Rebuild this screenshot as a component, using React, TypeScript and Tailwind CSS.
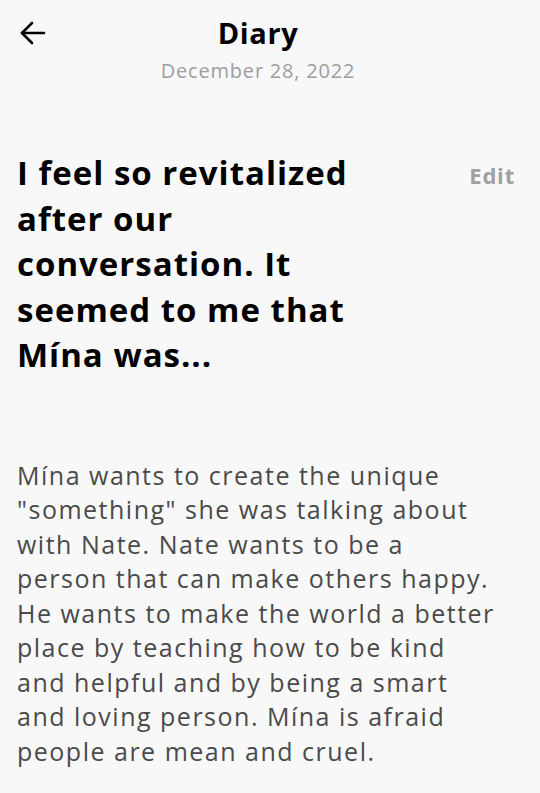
const bodyLines = [
  'Mína wants to create the unique',
  '"something" she was talking about',
  'with Nate. Nate wants to be a',
  'person that can make others happy.',
  'He wants to make the world a better',
  'place by teaching how to be kind',
  'and helpful and by being a smart',
  'and loving person. Mína is afraid',
  'people are mean and cruel.',
]

export default function App() {
  const font = { fontFamily: '"Open Sans", "Noto Sans", sans-serif' }
  return (
    <div className="min-h-[793px] w-[540px] bg-[#f8f8f8] text-black" style={font}>
      {/* Header */}
      <div className="relative h-[100px]">
        <button className="absolute left-[20px] top-[21px] text-black">
          <svg width="26" height="24" viewBox="0 0 26 24" fill="none" stroke="currentColor" strokeWidth="2.6" strokeLinecap="round" strokeLinejoin="round">
            <path d="M2 12H24" />
            <path d="M12 2L2 12L12 22" />
          </svg>
        </button>
        <div className="flex flex-col items-center pt-[13px] pr-[24px]">
          <h1 className="text-[29px] font-bold leading-[40px] tracking-[0.6px]">Diary</h1>
          <p className="mt-[5px] text-[20px] leading-[26px] tracking-[0.8px] text-[#9e9e9e]">December 28, 2022</p>
        </div>
      </div>

      {/* Title */}
      <div className="flex items-start justify-between pl-[17px] pr-[25px] pt-[50px]">
        <h2 className="w-[360px] text-[33px] font-bold leading-[45.5px] tracking-[1px]">
          I feel so revitalized after our conversation. It seemed to me that Mína was...
        </h2>
        <span className="mt-[9px] text-[22px] font-bold tracking-[0.8px] text-[#a0a0a0]">Edit</span>
      </div>

      {/* Body */}
      <p className="mt-[80px] pl-[17px] text-[25px] leading-[34.5px] tracking-[1.5px] text-[#4a4a4a]">
        {bodyLines.map((line, i) => (
          <span key={i} className="block whitespace-nowrap">{line}</span>
        ))}
      </p>
    </div>
  )
}
